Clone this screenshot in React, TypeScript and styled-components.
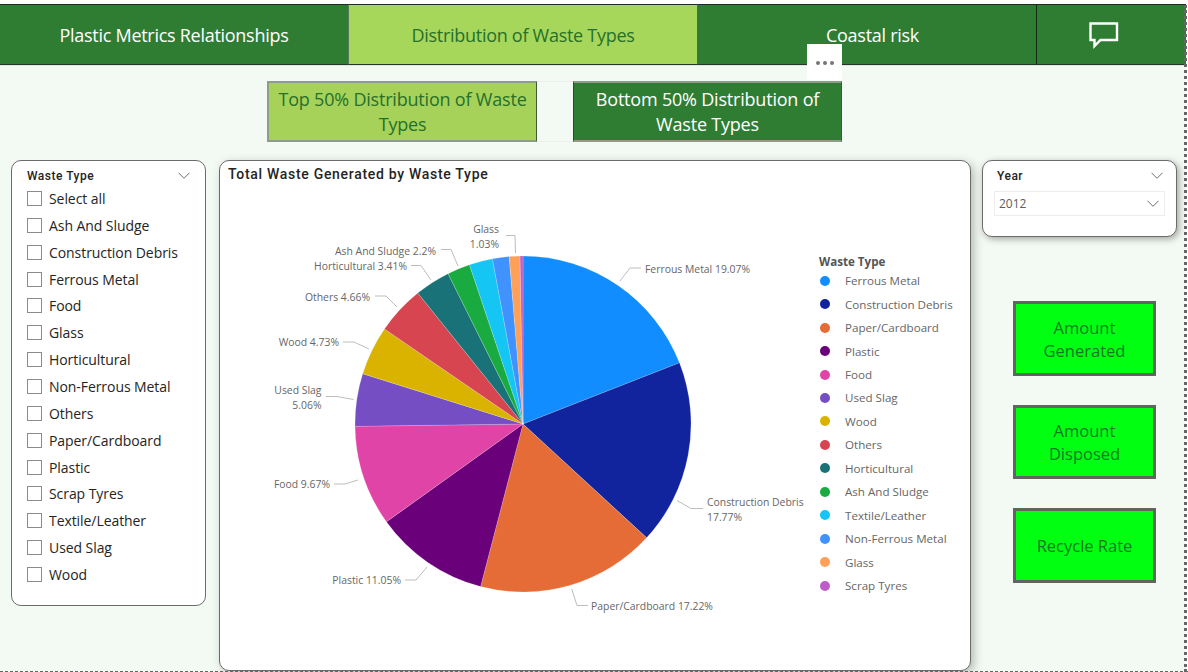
import React from "react";
import styled, { createGlobalStyle } from "styled-components";

const Global = createGlobalStyle`
  html, body { margin: 0; padding: 0; background: #fff; }
  #root { width: 1188px; height: 672px; overflow: hidden; }
  * { box-sizing: border-box; }
`;
const UI = `"Open Sans", "Noto Sans", "Liberation Sans", sans-serif`;
const DIN = `Roboto, "Liberation Sans", sans-serif`;

const Page = styled.div`
  position: relative; width: 1188px; height: 672px; overflow: hidden;
  background: #fff; font-family: ${UI};
`;
const Canvas = styled.div`
  width: 1186px; height: 672px; margin-top: 4px; background: #f3f9f3;
  display: flex; flex-direction: column;
`;
const Nav = styled.nav`
  display: grid; grid-template-columns: 349px 349px 339px 149px; height: 61px; flex: none;
  box-shadow: 0 1px 0 #dfe7df;
`;
const NavTab = styled.div<{ $active?: boolean; $shift?: number }>`
  display: flex; align-items: center; justify-content: center;
  padding-left: ${p => p.$shift ?? 0}px;
  background: ${p => (p.$active ? "#a6d75b" : "#2e7d32")};
  color: ${p => (p.$active ? "#27702b" : "#fff")};
  border-top: 1px solid #1c2b1d; border-bottom: 1px solid #26362a;
  border-right: 1px solid ${p => (p.$active ? "#4f6f3a" : "#5c7a5c")};
  font-size: 18px; letter-spacing: -0.28px;
`;
const ChatTab = styled(NavTab)`
  border-left: 1px solid #102a12; border-right: none; margin-left: -1px; padding: 2px 16px 0 0;
`;
const SubNav = styled.div`
  display: flex; gap: 36px; margin: 16px 0 0 267px; height: 61px; width: 575px; flex: none;
  border-top: 1px solid #ecefec; border-bottom: 1px solid #ecefec;
`;
const SubButton = styled.div<{ $active?: boolean }>`
  width: ${p => (p.$active ? "270px" : "269px")}; height: 61px; margin-top: -1px; flex: none;
  display: flex; align-items: center; justify-content: center; text-align: center;
  background: ${p => (p.$active ? "#a6d25a" : "#2e7d32")};
  color: ${p => (p.$active ? "#27702b" : "#fff")};
  border-top: 2px solid #8f9c8a; border-bottom: 2px solid #8f9c8a;
  border-left: ${p => (p.$active ? "2px solid #8f9c8a" : "1px solid #234f26")};
  border-right: 1px solid #3f5a35;
  font-size: 18px; line-height: 25px; letter-spacing: -0.2px; padding: 0 6px;
`;
const More = styled.div`
  position: absolute; left: 807px; top: 44px; width: 35px; height: 36px; background: #fff;
  display: flex; gap: 3px; align-items: center; justify-content: center; padding-top: 2px;
`;
const Dot = styled.i`
  width: 4px; height: 4px; border-radius: 50%; background: #777;
`;
const Main = styled.div`
  display: grid; grid-template-columns: 208px 763px 195px;
  margin: 18px 0 0 11px; align-items: start;
`;
const Card = styled.section`
  background: #fff; border: 1px solid #6b6b6b; border-radius: 10px;
`;
const Slicer = styled(Card)`
  width: 195px; height: 446px; padding: 7px 15px 0; display: flex; flex-direction: column;
`;
const SlicerHead = styled.div`
  display: flex; justify-content: space-between; align-items: center; height: 16px; margin-bottom: 1px;
  font: 500 12px ${DIN}; color: #252423; letter-spacing: 0.5px;
`;
const CheckRow = styled.label`
  display: flex; align-items: center; gap: 7px; height: 26.86px; flex: none;
  font-size: 14px; color: #252423; letter-spacing: -0.07px;
`;
const Box = styled.span`
  width: 15px; height: 15px; border: 1px solid #8f8a86; background: #fff; flex: none;
`;
const Chart = styled(Card)`
  width: 752px; height: 511px; padding: 4px 8px 0; display: flex; flex-direction: column;
  box-shadow: 3px 3px 10px rgba(60, 70, 60, 0.35);
`;
const ChartTitle = styled.h2`
  margin: 0; font: 500 14px/18px ${DIN}; letter-spacing: 0.7px; color: #252423;
`;
const ChartBody = styled.div`
  display: flex; margin: 12px 0 0 -8px;
`;
const PieSvg = styled.svg`
  display: block; flex: none; width: 585px; height: 470px;
`;
const Legend = styled.div`
  display: flex; flex-direction: column; padding: 59px 0 0 14px;
  font-size: 11.6px; color: #666;
`;
const LegendTitle = styled.div`
  font-weight: 700; font-size: 11.6px; color: #555; height: 15px; line-height: 16px;
`;
const LegendRow = styled.div`
  display: flex; align-items: center; gap: 15px; height: 23.46px; white-space: nowrap;
`;
const Swatch = styled.i<{ $c: string }>`
  width: 10px; height: 10px; border-radius: 50%; background: ${p => p.$c}; flex: none; margin-left: 1px;
`;
const Side = styled.div`
  display: flex; flex-direction: column; align-items: center;
`;
const YearCard = styled(Card)`
  width: 195px; height: 77px; padding: 7px 11px 0 11px;
  box-shadow: 2px 2px 7px rgba(0, 0, 0, 0.35);
`;
const YearHead = styled(SlicerHead)`
  padding: 0 2px 0 3px; margin-bottom: 7px;
`;
const Select = styled.div`
  height: 25px; border: 1px solid #eceeec; display: flex; align-items: center; justify-content: space-between;
  padding: 0 5px 0 4px; font-size: 12px; color: #605e5c;
`;
const Metrics = styled.div`
  display: flex; flex-direction: column; gap: 29px; margin: 64px 0 0 10px;
`;
const Metric = styled.div`
  width: 143px; height: 74.5px; background: #00ff11; border: 3px solid #5f6660;
  display: flex; align-items: center; justify-content: center; text-align: center;
  font-size: 16.5px; line-height: 23px; color: #107a22; padding: 1px 20px 0;
`;
const FrameRight = styled.div`
  position: absolute; right: 1px; top: 5px; bottom: 0; width: 3px;
  border-right: 3px dotted #666;
`;
const FrameBottom = styled.div`
  position: absolute; left: 0; right: 0; bottom: 0; height: 2px;
  border-bottom: 1px dashed #666;
`;

const Chevron = ({ size = 12 }: { size?: number }) => (
  <svg width={size} height={size * 0.6} viewBox="0 0 12 7" fill="none" stroke="#605e5c" strokeWidth="0.9">
    <path d="M0.5 0.7 L6 6.2 L11.5 0.7" />
  </svg>
);

const data: [string, number, string][] = [
  ["Ferrous Metal", 19.07, "#118DFF"],
  ["Construction Debris", 17.77, "#12239E"],
  ["Paper/Cardboard", 17.22, "#E66C37"],
  ["Plastic", 11.05, "#6B007B"],
  ["Food", 9.67, "#E044A7"],
  ["Used Slag", 5.06, "#744EC2"],
  ["Wood", 4.73, "#D9B300"],
  ["Others", 4.66, "#D64550"],
  ["Horticultural", 3.41, "#197278"],
  ["Ash And Sludge", 2.2, "#1AAB40"],
  ["Textile/Leather", 2.25, "#15C6F4"],
  ["Non-Ferrous Metal", 1.6, "#4092FF"],
  ["Glass", 1.03, "#FFA058"],
  ["Scrap Tyres", 0.28, "#BE5DC9"],
];
const CX = 523, CY = 424, R = 168;
const pt = (pct: number) => {
  const a = (pct / 100) * 2 * Math.PI;
  return [CX + R * Math.sin(a), CY - R * Math.cos(a)];
};
let acc = 0;
const slices = data.map(([n, v, c]) => {
  const [x1, y1] = pt(acc);
  acc += v;
  const [x2, y2] = pt(acc);
  return { n, c, d: `M${CX} ${CY} L${x1.toFixed(2)} ${y1.toFixed(2)} A${R} ${R} 0 ${v > 50 ? 1 : 0} 1 ${x2.toFixed(2)} ${y2.toFixed(2)} Z` };
});

type Lab = { t: string[]; x: number; y: number; a: "start" | "end"; l: string };
const labels: Lab[] = [
  { t: ["Glass", "1.03%"], x: 499, y: 233, a: "end", l: "506,235.5 515,235.5 515.5,253" },
  { t: ["Ash And Sludge 2.2%"], x: 436, y: 255, a: "end", l: "441,249.5 451,249.5 458,266" },
  { t: ["Horticultural 3.41%"], x: 407, y: 270, a: "end", l: "411,265.5 421,265.5 431,280" },
  { t: ["Others 4.66%"], x: 370, y: 301, a: "end", l: "375,296 386,296 397,307" },
  { t: ["Wood 4.73%"], x: 339, y: 346, a: "end", l: "343,342 354,342 369,349" },
  { t: ["Used Slag", "5.06%"], x: 321.5, y: 394, a: "end", l: "326,396.5 337,396.5 353.5,399.5" },
  { t: ["Food 9.67%"], x: 330, y: 488, a: "end", l: "334,484 345,484 358,480" },
  { t: ["Plastic 11.05%"], x: 401, y: 584, a: "end", l: "405,580 416,580 427,567" },
  { t: ["Paper/Cardboard 17.22%"], x: 591, y: 610, a: "start", l: "571.7,589 577,605.5 588,605.5" },
  { t: ["Construction Debris", "17.77%"], x: 707, y: 506, a: "start", l: "677,500.5 691,508.5 703,508.5" },
  { t: ["Ferrous Metal 19.07%"], x: 645, y: 273, a: "start", l: "620,281 630,268 641,268" },
];

const slicerItems = ["Select all", "Ash And Sludge", "Construction Debris", "Ferrous Metal", "Food", "Glass", "Horticultural", "Non-Ferrous Metal", "Others", "Paper/Cardboard", "Plastic", "Scrap Tyres", "Textile/Leather", "Used Slag", "Wood"];

export default function App() {
  return (
    <Page>
      <Global />
      <Canvas>
        <Nav>
          <NavTab>Plastic Metrics Relationships</NavTab>
          <NavTab $active>Distribution of Waste Types</NavTab>
          <NavTab $shift={11}>Coastal risk</NavTab>
          <ChatTab>
            <svg width="30" height="27" viewBox="0 0 30 27" fill="none" stroke="#fff" strokeWidth="2.4">
              <path d="M1.5 1.5 H28 V18 H11.5 L5.5 24 V18 H1.5 Z" />
            </svg>
          </ChatTab>
        </Nav>
        <SubNav>
          <SubButton $active>Top 50% Distribution of Waste Types</SubButton>
          <SubButton>Bottom 50% Distribution of Waste Types</SubButton>
        </SubNav>
        <Main>
          <Slicer>
            <SlicerHead>Waste Type<Chevron /></SlicerHead>
            {slicerItems.map(i => (
              <CheckRow key={i}><Box />{i}</CheckRow>
            ))}
          </Slicer>
          <Chart>
            <ChartTitle>Total Waste Generated by Waste Type</ChartTitle>
            <ChartBody>
              <PieSvg viewBox="220 195 585 470">
                {slices.map(s => (
                  <path key={s.n} d={s.d} fill={s.c} stroke="#fff" strokeOpacity="0.3" strokeWidth="0.6" />
                ))}
                {labels.map(l => (
                  <g key={l.t[0]}>
                    <polyline points={l.l} fill="none" stroke="#bdbdbd" strokeWidth="1" />
                    <text x={l.x} y={l.y} textAnchor={l.a} fontSize="10.4" fill="#666" fontFamily={UI}>
                      {l.t.map((t, i) => (
                        <tspan key={t} x={l.x} dy={i ? 15 : 0}>{t}</tspan>
                      ))}
                    </text>
                  </g>
                ))}
              </PieSvg>
              <Legend>
                <LegendTitle>Waste Type</LegendTitle>
                {data.map(([n, , c]) => (
                  <LegendRow key={n}><Swatch $c={c} />{n}</LegendRow>
                ))}
              </Legend>
            </ChartBody>
          </Chart>
          <Side>
            <YearCard>
              <YearHead>Year<Chevron /></YearHead>
              <Select>2012<Chevron /></Select>
            </YearCard>
            <Metrics>
              <Metric>Amount Generated</Metric>
              <Metric>Amount Disposed</Metric>
              <Metric>Recycle Rate</Metric>
            </Metrics>
          </Side>
        </Main>
      </Canvas>
      <More><Dot /><Dot /><Dot /></More>
      <FrameRight />
      <FrameBottom />
    </Page>
  );
}
